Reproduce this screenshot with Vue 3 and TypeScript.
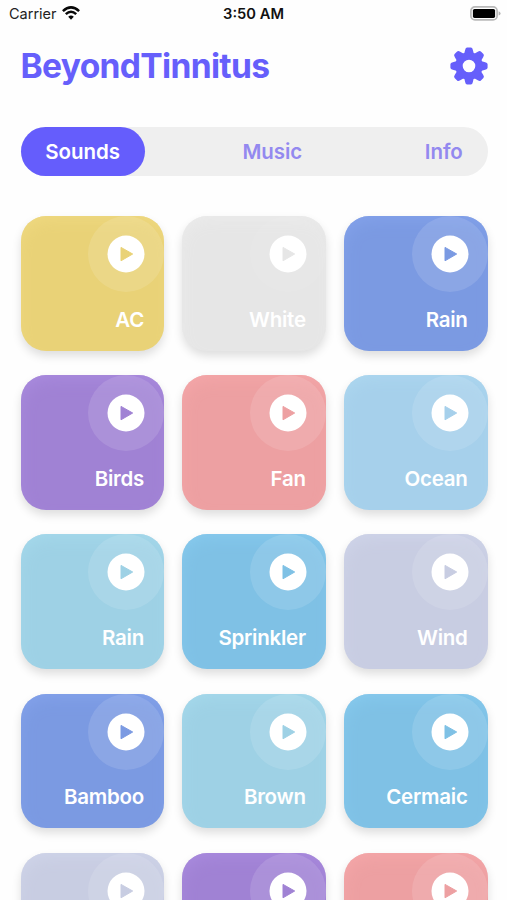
<script setup lang="ts">
interface Sound {
  name: string
  tone: string
}

const tabs: string[] = ['Sounds', 'Music', 'Info']
const active = 'Sounds'

const sounds: Sound[] = [
  { name: 'AC', tone: 'yellow' },
  { name: 'White', tone: 'grey' },
  { name: 'Rain', tone: 'blue' },
  { name: 'Birds', tone: 'purple' },
  { name: 'Fan', tone: 'red' },
  { name: 'Ocean', tone: 'sky' },
  { name: 'Rain', tone: 'aqua' },
  { name: 'Sprinkler', tone: 'azure' },
  { name: 'Wind', tone: 'mist' },
  { name: 'Bamboo', tone: 'blue' },
  { name: 'Brown', tone: 'aqua' },
  { name: 'Cermaic', tone: 'azure' },
  { name: '', tone: 'mist' },
  { name: '', tone: 'purple' },
  { name: '', tone: 'red' },
]

const teeth: number[] = [0, 45, 90, 135, 180, 225, 270, 315]
</script>

<template>
  <div class="screen">
    <div class="status">
      <div class="carrier">
        <span>Carrier</span>
        <svg class="wifi" viewBox="0 0 18 14" width="18" height="14">
          <g fill="none" stroke="#080808" stroke-width="2.5">
            <path d="M0.9 5.1 Q9 -2.4 17.1 5.1" />
            <path d="M3.8 8.2 Q9 3.4 14.2 8.2" />
          </g>
          <path d="M6.2 10.8 Q9 8.4 11.8 10.8 L9 13.7 Z" fill="#080808" />
        </svg>
      </div>
      <span class="clock">3:50 AM</span>
      <svg class="battery" viewBox="0 0 31 15" width="31" height="15">
        <rect x="0.9" y="0.9" width="26.2" height="13" rx="4" fill="#fff" stroke="#b9b9b9" stroke-width="1.7" />
        <rect x="2.9" y="2.9" width="22.2" height="9" rx="1.6" fill="#000" />
        <path d="M28.6 5.2 Q30.6 5.9 30.6 7.4 Q30.6 8.9 28.6 9.6 Z" fill="#b5b5b5" />
      </svg>
    </div>

    <header class="header">
      <h1>BeyondTinnitus</h1>
      <svg class="gear" viewBox="-19 -19 38 38" width="38" height="38">
        <path
          v-for="angle in teeth"
          :key="angle"
          :transform="`rotate(${angle})`"
          d="M-6.2 -10 Q-4.4 -12.4 -3.8 -16.2 Q-3.4 -18.6 -1.8 -18.6 H1.8 Q3.4 -18.6 3.8 -16.2 Q4.4 -12.4 6.2 -10 Z"
          fill="#665ffb"
        />
        <circle r="10" fill="none" stroke="#665ffb" stroke-width="7.4" />
      </svg>
    </header>

    <nav class="tabs">
      <button v-for="tab in tabs" :key="tab" class="tab" :class="{ active: tab === active }">{{ tab }}</button>
    </nav>

    <main class="grid">
      <article v-for="(sound, i) in sounds" :key="i" class="card" :class="sound.tone">
        <div class="halo">
          <svg viewBox="0 0 38 38" width="38" height="38">
            <circle cx="19" cy="19" r="18.5" fill="#fff" />
            <path class="play" d="M14 12.4 L25.7 19 L14 25.8 Z" />
          </svg>
        </div>
        <span class="name">{{ sound.name }}</span>
      </article>
    </main>
  </div>
</template>

<style>
body {
  margin: 0;
  background: #fefefe;
}
</style>

<style scoped>
.screen {
  width: 507px;
  height: 900px;
  overflow: hidden;
  box-sizing: border-box;
  background: #fefefe;
  font-family: Inter, "Liberation Sans", sans-serif;
}
.status {
  height: 27px;
  display: grid;
  grid-template-columns: 1fr auto 1fr;
  align-items: center;
  padding: 0 6px 0 9px;
  font-size: 14.5px;
  color: #222;
}
.carrier {
  display: flex;
  align-items: center;
  gap: 5px;
}
.wifi {
  margin-top: -2px;
}
.clock {
  margin: 0 3px 0 0;
  font-weight: 600;
  font-size: 14.7px;
  color: #111;
}
.battery {
  justify-self: end;
}
.header {
  height: 77px;
  margin: 0 19px 0 20.5px;
  display: flex;
  justify-content: space-between;
  align-items: center;
}
h1 {
  margin: 0;
  font-size: 33.6px;
  font-weight: 700;
  letter-spacing: -0.68px;
  color: #665ffb;
}
.tabs {
  width: 467px;
  height: 49.4px;
  margin: 22.5px 0 0 20.5px;
  border-radius: 25px;
  background: #efefef;
  display: flex;
  justify-content: space-between;
}
.tab {
  border: 0;
  padding: 0 24.7px;
  border-radius: 25px;
  background: none;
  font: 600 20.5px Inter, "Liberation Sans", sans-serif;
  letter-spacing: -0.05px;
  color: #9389ef;
}
.tab.active {
  background: #655dfc;
  color: #fff;
}
.grid {
  margin: 40.1px 0 0 20.5px;
  display: grid;
  grid-template-columns: repeat(3, 143.5px);
  grid-auto-rows: 134.7px;
  column-gap: 18.3px;
  row-gap: 24.5px;
}
.card {
  position: relative;
  overflow: hidden;
  border-radius: 25px;
  background: var(--base);
  box-shadow: 0 5px 10px rgba(0, 0, 0, 0.13), inset 2px 8px 18px -6px var(--edge);
}
.halo {
  position: absolute;
  top: 0;
  right: 0;
  width: 76px;
  height: 76px;
  border-radius: 50%;
  background: rgba(255, 255, 255, 0.12);
  display: grid;
  place-items: center;
}
.play {
  fill: var(--base);
  stroke: var(--base);
  stroke-width: 1;
  stroke-linejoin: round;
}
.name {
  position: absolute;
  right: 20px;
  bottom: 19px;
  font-size: 20.5px;
  line-height: 25px;
  font-weight: 600;
  letter-spacing: -0.25px;
  color: #fff;
}
.yellow { --base: #e9d277; --edge: #f0da82; }
.grey { --base: #e6e6e6; --edge: #ececec; }
.grey .halo { background: rgba(255, 255, 255, 0.06); }
.blue { --base: #7b9ae2; --edge: #85a3ec; }
.purple { --base: #a082d4; --edge: #ab8ce0; }
.red { --base: #eda0a2; --edge: #f6a8aa; }
.sky { --base: #a6d0eb; --edge: #aed8f0; }
.aqua { --base: #9ed1e5; --edge: #a6daec; }
.azure { --base: #7fc1e5; --edge: #88cbef; }
.mist { --base: #c8cde2; --edge: #d0d5ea; }
</style>
